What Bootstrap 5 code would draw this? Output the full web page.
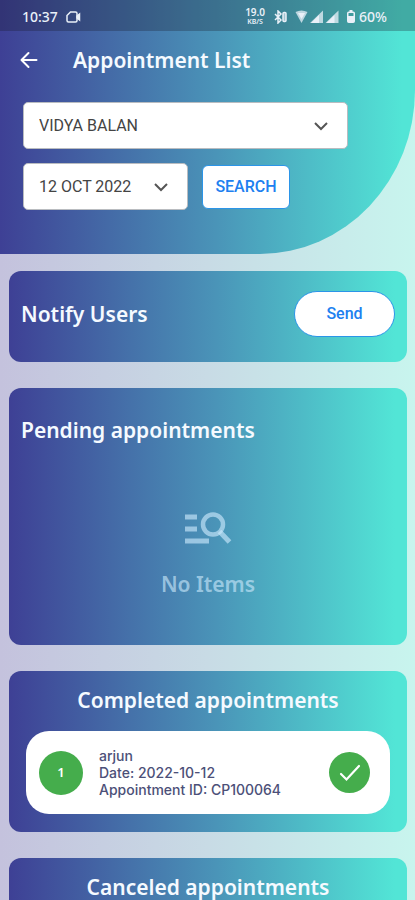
<!DOCTYPE html>
<html lang="en">
<head>
<meta charset="utf-8">
<meta name="viewport" content="width=device-width, initial-scale=1">
<title>Appointment List</title>
<link href="https://cdn.jsdelivr.net/npm/bootstrap@5.3.0/dist/css/bootstrap.min.css" rel="stylesheet">
<style>
  :root { --fade: linear-gradient(90deg, #3e4095 0%, #4a94b8 52%, #52e5d6 97%); }
  body { font-family: "Noto Sans", sans-serif; background: linear-gradient(90deg, #c4c2dd, #c8dbe5 50%, #c8f5ee); }
  .app-shell { height: 100vh; }
  .app-top { background: var(--fade); border-bottom-right-radius: 155px 164px; padding-bottom: 44px; }
  .status-strip { height: 31px; padding: 2px 28px 0 22px; background: rgba(20, 20, 35, .28); font-size: 14px; font-weight: 500; color: #e9f0f8; }
  .net-speed { font-size: 10px; line-height: 11px; font-weight: 600; margin-right: 9px; }
  .net-speed small { font-size: 7px; line-height: 8px; }
  .title-bar { height: 57px; padding-left: 18px; gap: 33px; }
  .heading { font-size: 21px; line-height: 26px; font-weight: 600; color: #f5faff; margin: 0; }
  .filters { padding: 14px 23px 0; gap: 14px; }
  .picker { font-family: Roboto, sans-serif; font-size: 16px; color: #444; height: 47px; padding: 0 40px 0 15px; border: 1px solid #b9bcc0; border-radius: 5px;
    background: #fff url("data:image/svg+xml,%3Csvg xmlns='http://www.w3.org/2000/svg' viewBox='0 0 14 10' fill='none' stroke='%23555' stroke-width='2'%3E%3Cpath d='M1 2l6 6 6-6'/%3E%3C/svg%3E") no-repeat right 19px center / 14px 10px; }
  .picker-name { width: 88%; }
  .picker-date { width: 165px; }
  .filter-row { gap: 14px; }
  .btn-plain { font-family: Roboto, sans-serif; font-size: 16px; font-weight: 500; --bs-btn-color: #2080f0; --bs-btn-bg: #fff; --bs-btn-border-color: #2b95e8; --bs-btn-hover-color: #1769d0; --bs-btn-hover-bg: #f2f8ff; --bs-btn-hover-border-color: #2080f0; }
  .btn-search { width: 88px; height: 44px; padding: 0; border-radius: 6px; }
  .btn-send { width: 101px; height: 46px; padding: 0; border-radius: 23px; }
  .panels { padding: 17px 8px 0 9px; gap: 26px; min-height: 0; scrollbar-width: none; }
  .panels::-webkit-scrollbar { display: none; }
  .panel { background: var(--fade); border-radius: 12px; padding: 12px; flex-shrink: 0; }
  .panel-notify { padding-top: 20px; padding-bottom: 25px; }
  .panel-pending { padding-top: 29px; padding-bottom: 48px; }
  .nothing { margin-top: 69px; color: rgba(200, 231, 250, .65); gap: 25px; }
  .nothing .heading { color: inherit; }
  .panel-done { padding: 16px 17px 18px; }
  .entry { background: #fff; border-radius: 23px; padding: 12px 20px 12px 13px; margin-top: 18px; min-height: 83px; }
  .entry-num { width: 44px; height: 44px; background: #45ad4c; color: #fff; font-size: 13px; font-weight: 600; margin-right: 16px; }
  .entry-text { font-family: Inter, sans-serif; font-size: 14px; line-height: 17px; font-weight: 500; color: #4c5078; }
</style>
<script src="https://cdn.jsdelivr.net/npm/bootstrap@5.3.0/dist/js/bootstrap.bundle.min.js"></script>
</head>
<body>
<div class="app-shell d-flex flex-column overflow-hidden">
  <header class="app-top">
    <div class="status-strip d-flex align-items-center">
      <span>10:37</span>
      <svg class="ms-2" width="15" height="12" viewBox="0 0 15 12" fill="none" stroke="currentColor" stroke-width="1.5" aria-hidden="true"><path d="M4.500 1h5Q11 1 11 2.500v7Q11 11 9.500 11H2.500Q1 11 1 9.500v-5z"/><path d="M11 5l2.500-2v6L11 7z" fill="currentColor"/></svg>
      <span class="net-speed ms-auto text-center d-flex flex-column"><span>19.0</span><small>KB/S</small></span>
      <svg class="me-2" width="13" height="14" viewBox="0 0 13 14" fill="none" stroke="currentColor" stroke-width="1.500" aria-hidden="true"><path d="M1 4l6 6-3 3V1l3 3-6 6"/><rect x="9" y="2.500" width="3" height="9" rx="1" fill="currentColor" fill-opacity=".6"/></svg>
      <svg width="44" height="14" viewBox="0 0 44 14" fill="currentColor" aria-hidden="true"><path d="M.5 2Q6.500-1 12.500 2L6.500 13z" opacity=".75"/><path d="M3 3h7l-3.500 6z"/><path d="M28 .5V13H15z" opacity=".75"/><path d="M24 5v8h-8z"/><path d="M43.500.5V13h-13z" opacity=".75"/><path d="M39.500 5v8h-8z"/></svg>
      <svg class="ms-2" width="8" height="13" viewBox="0 0 8 13" fill="none" stroke="currentColor" stroke-width="1.500" aria-hidden="true"><path d="M2.500 1h3" stroke-width="2"/><rect x=".75" y="2.250" width="6.500" height="10" rx="1"/><path d="M1 6h6v6H1z" fill="currentColor" stroke="none"/></svg>
      <span class="ms-1">60%</span>
    </div>
    <div class="title-bar d-flex align-items-center">
      <button type="button" class="btn p-0 border-0 text-white lh-1" aria-label="Back">
        <svg width="22" height="20" viewBox="0 0 22 20" fill="none" stroke="currentColor" stroke-width="2" stroke-linecap="round" stroke-linejoin="round"><path d="M10.500 3L3.500 10l7 7M4 10h14.500"/></svg>
      </button>
      <h1 class="heading">Appointment List</h1>
    </div>
    <form class="filters d-flex flex-column" onsubmit="return false">
      <select class="form-select picker picker-name" aria-label="Doctor"><option>VIDYA BALAN</option></select>
      <div class="filter-row d-flex align-items-center">
        <select class="form-select picker picker-date" aria-label="Date"><option>12 OCT 2022</option></select>
        <button type="submit" class="btn btn-plain btn-search">SEARCH</button>
      </div>
    </form>
  </header>
  <main class="panels d-flex flex-column overflow-auto">
    <section class="panel panel-notify d-flex align-items-center justify-content-between">
      <h2 class="heading">Notify Users</h2>
      <button type="button" class="btn btn-plain btn-send">Send</button>
    </section>
    <section class="panel panel-pending">
      <h2 class="heading">Pending appointments</h2>
      <div class="nothing d-flex flex-column align-items-center">
        <svg width="48" height="34" viewBox="0 0 48 34" fill="none" stroke="currentColor" aria-hidden="true"><path d="M1 5h12M1 17h12M1 29h24" stroke-width="5"/><circle cx="29" cy="12.500" r="10" stroke-width="4.500"/><path d="M35.500 19.500L45.500 30" stroke-width="5"/></svg>
        <p class="heading">No Items</p>
      </div>
    </section>
    <section class="panel panel-done">
      <h2 class="heading text-center">Completed appointments</h2>
      <div class="entry d-flex align-items-center">
        <span class="entry-num rounded-circle d-flex align-items-center justify-content-center">1</span>
        <div class="entry-text flex-grow-1">
          <div>arjun</div>
          <div>Date: 2022-10-12</div>
          <div>Appointment ID: CP100064</div>
        </div>
        <svg width="41" height="41" viewBox="0 0 41 41" fill="none" role="img" aria-label="Completed"><circle cx="20.500" cy="20.500" r="20.500" fill="#45ad4c"/><path d="M12 22l5.500 5.500L30 14" stroke="#fff" stroke-width="2.200" stroke-linecap="round"/></svg>
      </div>
    </section>
    <section class="panel panel-done">
      <h2 class="heading text-center">Canceled appointments</h2>
    </section>
  </main>
</div>
</body>
</html>
